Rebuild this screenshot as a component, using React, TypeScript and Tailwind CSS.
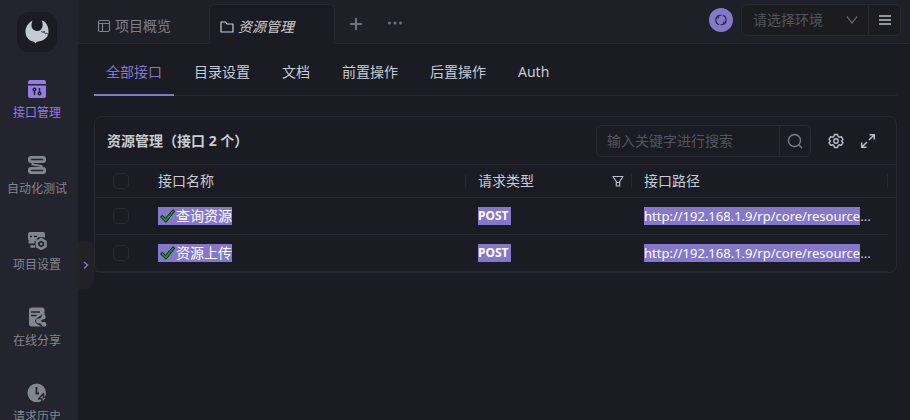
import type { ReactNode } from "react";

type IconProps = { className?: string };

function Logo() {
  return (
    <svg width="26" height="26" viewBox="0 0 26 26" aria-hidden="true">
      <path
        d="M8.500 1.500C4 4 1.500 8 1.500 12.500c0 6 4 9.500 8.500 10.300l1.500 1.400 1.500-1.400C20 22 24.500 18.500 24.500 12.500c0-4.500-1.500-8-5.500-11l-1 .5c.8 2.500 1 5 0 7-1 1.800-2.500 3-4.500 3-3.500 0-6-2.500-6-5.500 0-2 .5-3.500 1-5Z"
        fill="#c3cad1"
      />
      <path d="m17 12.500 2.500 1 .5-1.500 1.500 3 1.500-1 1 1.500" fill="none" stroke="#343640" strokeWidth="0.900" />
    </svg>
  );
}

function ApiIcon({ className }: IconProps) {
  return (
    <svg className={className} viewBox="0 0 20 20" aria-hidden="true">
      <path d="M3 1h14a2 2 0 0 1 2 2v2H1V3a2 2 0 0 1 2-2Z" fill="currentColor" />
      <path d="M1 6.500h18V17a2 2 0 0 1-2 2H3a2 2 0 0 1-2-2Z" fill="currentColor" />
      <g fill="none" stroke="#24242e" strokeWidth="1.500">
        <circle cx="7.500" cy="10.500" r="1.300" />
        <path d="M7.500 12v4M12.500 9v4" />
        <circle cx="12.500" cy="14.500" r="1.300" />
      </g>
    </svg>
  );
}

function AutoTestIcon({ className }: IconProps) {
  return (
    <svg className={className} viewBox="0 0 20 20" aria-hidden="true">
      <rect x="1" y="1" width="18" height="7" rx="3" fill="currentColor" />
      <rect x="1" y="12" width="18" height="7" rx="3" fill="currentColor" />
      <path d="M5.500 7.500v2l9 1.500v2" fill="none" stroke="currentColor" strokeWidth="2" />
      <path d="M4.500 4.500h11M4.500 15.500h11" stroke="#24242e" strokeWidth="1.500" strokeLinecap="round" />
    </svg>
  );
}

function ProjectSettingsIcon({ className }: IconProps) {
  return (
    <svg className={className} viewBox="0 0 20 20" aria-hidden="true">
      <rect x="1" y="1" width="17" height="9" rx="2" fill="currentColor" />
      <path d="M3 5.500h2M7 5.500h3" stroke="#24242e" strokeWidth="1.500" />
      <path d="M2.500 11.300h4M4.500 15.500h2.500" stroke="currentColor" strokeWidth="2.600" strokeLinecap="round" />
      <path d="M11 6.200h6.500l3.500 6.800-3.500 7H11l-3.500-7Z" fill="#24242e" />
      <path d="m14.200 8.200 4.300 2.400v4.800l-4.300 2.400-4.300-2.400v-4.800Z" fill="none" stroke="currentColor" strokeWidth="2.600" strokeLinejoin="round" />
      <circle cx="14.200" cy="13" r="1.300" fill="currentColor" />
    </svg>
  );
}

function ShareIcon({ className }: IconProps) {
  return (
    <svg className={className} viewBox="0 0 20 20" aria-hidden="true">
      <rect x="2" y="0.500" width="15.500" height="19" rx="2.500" fill="currentColor" />
      <path d="M4 5h9M4 8.500h5.500" stroke="#24242e" strokeWidth="1.600" />
      <path d="m17 10-5.500 4 5.500 3.500" fill="none" stroke="#24242e" strokeWidth="6.400" strokeLinejoin="round" />
      <path d="m17 10-5.500 4 5.500 3.500" fill="none" stroke="currentColor" strokeWidth="2.600" />
      <circle cx="16.500" cy="10" r="2.200" fill="currentColor" />
      <circle cx="11.500" cy="14" r="2.400" fill="currentColor" />
      <circle cx="17" cy="17.300" r="2.400" fill="currentColor" />
    </svg>
  );
}

function HistoryIcon({ className }: IconProps) {
  return (
    <svg className={className} viewBox="0 0 20 20" aria-hidden="true">
      <circle cx="9.700" cy="9.800" r="9.300" fill="currentColor" />
      <path d="M9.500 4v6.500h2.500" fill="none" stroke="#24242e" strokeWidth="1.800" />
      <path d="m16.500 10.500-5 5.500h3.500v4l5-5.500h-3.500Z" fill="currentColor" stroke="#24242e" strokeWidth="1.400" strokeLinejoin="round" />
    </svg>
  );
}

function LayoutIcon({ className }: IconProps) {
  return (
    <svg className={className} viewBox="0 0 14 14" fill="none" stroke="currentColor" strokeWidth="1.200" aria-hidden="true">
      <rect x="1.500" y="1.500" width="11" height="11" rx="1.500" />
      <path d="M1.500 4.500h11M5.500 4.500v8" />
    </svg>
  );
}

function FolderIcon({ className }: IconProps) {
  return (
    <svg className={className} viewBox="0 0 14 14" fill="none" stroke="currentColor" strokeWidth="1.200" strokeLinejoin="round" aria-hidden="true">
      <path d="M1 2h4.500l1.500 2h6v8H1Z" />
    </svg>
  );
}

function SyncIcon({ className }: IconProps) {
  return (
    <svg className={className} viewBox="0 0 14 14" fill="none" stroke="currentColor" strokeWidth="1.200" aria-hidden="true">
      <path d="M5 11.700A5 5 0 0 1 4.200 2.800M9 2.300a5 5 0 0 1 .8 8.900" />
      <path d="M4.200 5.500V2.800M4.200 2.800 7.500 2M9.800 8.500v2.700M9.800 11.200 6.500 12" />
    </svg>
  );
}

function ChevronDown({ className }: IconProps) {
  return (
    <svg className={className} viewBox="0 0 12 12" fill="none" stroke="currentColor" strokeWidth="1.200" aria-hidden="true">
      <path d="m1 2.500 5 6.500 5-6.500" />
    </svg>
  );
}

function FilterIcon({ className }: IconProps) {
  return (
    <svg className={className} viewBox="0 0 12 12" fill="none" stroke="currentColor" strokeWidth="1.200" strokeLinejoin="round" aria-hidden="true">
      <path d="M1 1.500h10L7.700 6.500v4.500H4.300V6.500Z M4.300 7.500h3.400" />
    </svg>
  );
}

function SearchIcon({ className }: IconProps) {
  return (
    <svg className={className} viewBox="0 0 16 16" fill="none" stroke="currentColor" strokeWidth="1.300" aria-hidden="true">
      <circle cx="7.500" cy="7.500" r="6" />
      <path d="m11.500 11.500 3.500 3.500" />
    </svg>
  );
}

function GearIcon({ className }: IconProps) {
  return (
    <svg className={className} viewBox="0 0 16 16" fill="none" stroke="currentColor" strokeWidth="1.400" strokeLinejoin="round" aria-hidden="true">
      <path d="M6.500 1.500h3l.6 2 1.400.8 2-.5 1.500 2.600L13.600 8l1.400 1.600-1.500 2.600-2-.5-1.400.8-.6 2h-3l-.6-2-1.400-.8-2 .5L1 9.600 2.400 8 1 6.400l1.500-2.600 2 .5 1.400-.8Z" />
      <circle cx="8" cy="8" r="2.200" />
    </svg>
  );
}

function ExpandIcon({ className }: IconProps) {
  return (
    <svg className={className} viewBox="0 0 16 16" fill="none" stroke="currentColor" strokeWidth="1.500" aria-hidden="true">
      <path d="M9.500 1.700h4.800v4.800M14 2 9 7M1.700 9.500v4.800h4.800M2 14l5-5" />
    </svg>
  );
}

function CheckMark() {
  return (
    <svg className="h-[18px] w-[18px] shrink-0" viewBox="0 0 18 18" aria-hidden="true">
      <path d="m2.500 10 2-1.700 3 3L15 2.700l1.700 1.500L8 15.300Z" fill="#16961a" stroke="#0b1a10" strokeWidth="1" strokeLinejoin="round" />
    </svg>
  );
}

const navItems = [
  { label: "接口管理", Icon: ApiIcon, active: true },
  { label: "自动化测试", Icon: AutoTestIcon, active: false },
  { label: "项目设置", Icon: ProjectSettingsIcon, active: false },
  { label: "在线分享", Icon: ShareIcon, active: false },
  { label: "请求历史", Icon: HistoryIcon, active: false },
];

const sections = ["全部接口", "目录设置", "文档", "前置操作", "后置操作", "Auth"];

const rows = [
  { name: "查询资源", method: "POST", path: "http://192.168.1.9/rp/core/resource" },
  { name: "资源上传", method: "POST", path: "http://192.168.1.9/rp/core/resource" },
];

function Sidebar() {
  return (
    <aside className="relative w-[78px] shrink-0 bg-[#24242e]">
      <div className="flex h-full flex-col items-center overflow-hidden pt-3 pr-1">
        <div className="flex size-10 shrink-0 items-center justify-center rounded-xl bg-[#1b1b23]">
          <Logo />
        </div>
        <nav className="mt-[27px] flex w-full flex-col gap-8">
          {navItems.map(({ label, Icon, active }) => (
            <button
              key={label}
              type="button"
              className={`flex w-full flex-col items-center gap-1 text-xs whitespace-nowrap ${active ? "text-[#957be8]" : "text-[#82868f]"}`}
            >
              <Icon className="size-5" />
              <span className="leading-5">{label}</span>
            </button>
          ))}
        </nav>
      </div>
      <button
        type="button"
        aria-label="展开"
        className="absolute top-[241px] left-full flex h-12 w-4 items-center justify-center rounded-r-lg bg-[#222226] text-[#8377c8]"
      >
        <svg className="size-2" viewBox="0 0 8 8" fill="none" stroke="currentColor" strokeWidth="1.400" aria-hidden="true">
          <path d="m2 1 3.500 3L2 7.500" />
        </svg>
      </button>
    </aside>
  );
}

function TopBar() {
  return (
    <header className="flex h-11 shrink-0 bg-[#1f1f28]">
      <button type="button" className="flex w-[131px] items-center gap-1 border-b border-[#272732] pt-2 pl-[19px] text-[#7d818a]">
        <LayoutIcon className="size-[14px]" />
        <span>项目概览</span>
      </button>
      <button
        type="button"
        className="mt-1 flex w-[126px] items-center gap-1 rounded-t-md border border-b-0 border-[#272732] bg-[#1b1b23] pt-1 pl-[10px] text-[#c6cdd3]"
      >
        <FolderIcon className="size-[14px]" />
        <span className="italic">资源管理</span>
      </button>
      <div className="flex grow items-center border-b border-[#272732] pr-[9px] pl-[14px] text-[#70717f]">
        <button type="button" aria-label="新建" className="pt-1">
          <svg className="size-[14px]" viewBox="0 0 14 14" fill="none" stroke="currentColor" strokeWidth="2" aria-hidden="true">
            <path d="M7 1v12M1 7h12" />
          </svg>
        </button>
        <button type="button" aria-label="更多" className="ml-6 pt-1">
          <svg className="size-4" viewBox="0 0 16 16" fill="currentColor" aria-hidden="true">
            <circle cx="2.500" cy="7" r="1.500" />
            <circle cx="8" cy="7" r="1.500" />
            <circle cx="13.500" cy="7" r="1.500" />
          </svg>
        </button>
        <div className="mb-[3px] ml-auto flex items-center gap-2">
          <button type="button" aria-label="同步" className="flex size-6 items-center justify-center rounded-full bg-[#8578ca] text-[#292938]">
            <SyncIcon className="size-[14px]" />
          </button>
          <div className="flex h-8 rounded-md border border-[#292933] bg-[#1c1c20]">
            <div className="relative flex w-[127px] items-center border-r border-[#292933]">
              <select
                aria-label="环境"
                className="h-full w-full appearance-none bg-transparent pl-[11px] text-[#52555f] outline-none"
                defaultValue=""
              >
                <option value="">请选择环境</option>
              </select>
              <ChevronDown className="pointer-events-none absolute right-2.5 size-3" />
            </div>
            <button type="button" aria-label="环境管理" className="flex w-[31px] items-center justify-center text-[#b9bdc9]">
              <svg className="size-3" viewBox="0 0 12 12" stroke="currentColor" strokeWidth="1.500" aria-hidden="true">
                <path d="M0 2h12M0 6h12M0 10h12" />
              </svg>
            </button>
          </div>
        </div>
      </div>
    </header>
  );
}

function Highlight({ children }: { children: ReactNode }) {
  return <span className="inline-flex h-[18px] items-center bg-[#8578ca] leading-[18px] text-white">{children}</span>;
}

function Tick({ label }: { label: string }) {
  return (
    <input
      type="checkbox"
      aria-label={label}
      className="mx-auto block size-4 appearance-none rounded-[5px] border border-[#292933] checked:bg-[#8578ca]"
    />
  );
}

function ApiTable() {
  return (
    <table className="w-full table-fixed border-separate border-spacing-0 text-left">
      <colgroup>
        <col className="w-[51px]" />
        <col />
        <col className="w-[166px]" />
        <col className="w-[256px]" />
        <col className="w-2" />
      </colgroup>
      <thead>
        <tr className="h-[33px] *:border-b *:border-[#272732] *:p-0 *:font-normal">
          <th>
            <Tick label="全选" />
          </th>
          <th>
            <div className="flex h-[14px] items-center border-r border-[#272732] px-3">接口名称</div>
          </th>
          <th>
            <div className="flex h-[14px] items-center justify-between border-r border-[#272732] pr-[7px] pl-3">
              请求类型
              <button type="button" aria-label="筛选" className="text-[#b9bdc9]">
                <FilterIcon className="size-3" />
              </button>
            </div>
          </th>
          <th>
            <div className="flex h-[14px] items-center border-r border-[#272732] px-3">接口路径</div>
          </th>
          <th />
        </tr>
      </thead>
      <tbody>
        {rows.map((row) => (
          <tr key={row.name} className="h-[37px] *:border-b *:border-[#272732] *:p-0 *:last:border-b-0">
            <td>
              <Tick label={row.name} />
            </td>
            <td>
              <div className="flex items-center px-3">
                <Highlight>
                  <CheckMark />
                  {row.name}
                </Highlight>
              </div>
            </td>
            <td>
              <div className="flex items-center px-3">
                <Highlight>
                  <span className="pr-[3px] text-xs font-bold">{row.method}</span>
                </Highlight>
              </div>
            </td>
            <td>
              <div className="flex items-center px-3 text-[13px] leading-[18px]">
                <Highlight>{row.path}</Highlight>...
              </div>
            </td>
            <td />
          </tr>
        ))}
      </tbody>
    </table>
  );
}

export default function App() {
  return (
    <div className="flex h-screen overflow-hidden bg-[#1b1b23] font-['Noto_Sans','Noto_Sans_CJK_SC',sans-serif] text-sm text-[#c6cdd3]">
      <Sidebar />
      <div className="flex min-w-0 grow flex-col">
        <TopBar />
        <main className="min-h-0 grow pr-[13px] pl-4">
          <nav className="flex h-[52px] gap-2 border-b border-[#272732]">
            {sections.map((name, i) => (
              <button
                key={name}
                type="button"
                className={`h-[52px] px-3 pt-1.5 ${i === 0 ? "border-b-2 border-[#8578ca] text-[#8578ca]" : "border-b-2 border-transparent"}`}
              >
                {name}
              </button>
            ))}
          </nav>
          <section className="mt-5 rounded-lg border border-[#272732]">
            <div className="flex h-12 items-center border-b border-[#272732] pr-5 pl-3">
              <h1 className="font-bold">资源管理（接口 2 个）</h1>
              <form className="ml-auto flex h-8 w-[215px] overflow-hidden rounded-md border border-[#292933]" onSubmit={(e) => e.preventDefault()}>
                <input
                  type="text"
                  aria-label="搜索接口"
                  placeholder="输入关键字进行搜索"
                  className="min-w-0 grow bg-transparent px-[10px] outline-none placeholder:text-[#52555f]"
                />
                <button type="submit" aria-label="搜索" className="flex w-[31px] shrink-0 items-center justify-center border-l border-[#292933] text-[#7d818a]">
                  <SearchIcon className="size-4" />
                </button>
              </form>
              <button type="button" aria-label="设置" className="ml-[17px] text-[#b9bdc9]">
                <GearIcon className="size-4" />
              </button>
              <button type="button" aria-label="全屏" className="ml-4 text-[#b9bdc9]">
                <ExpandIcon className="size-4" />
              </button>
            </div>
            <ApiTable />
          </section>
        </main>
      </div>
    </div>
  );
}
